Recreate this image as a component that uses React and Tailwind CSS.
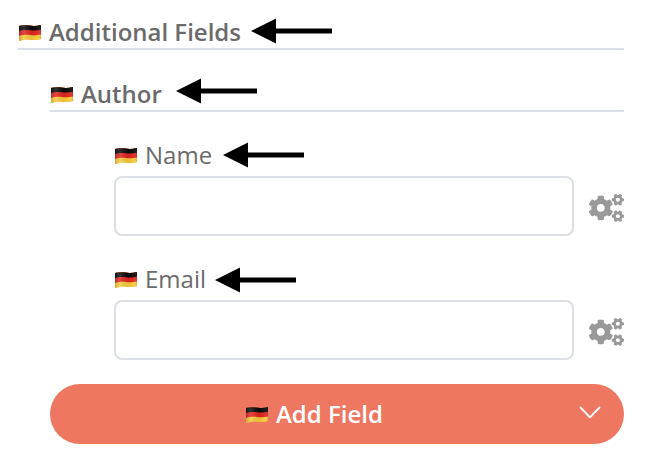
import { FaCogs } from "react-icons/fa";

function Flag({ id, className = "" }) {
  return (
    <svg className={`shrink-0 ${className}`} width="24" height="18" viewBox="0 0 24 18">
      <defs>
        <clipPath id={`${id}-shape`}>
          <path d="M1 2.6 Q1 2 1.8 1.8 C5 .9 8 1 12 1.6 S19 1.8 22.2 1 Q23 .8 23 1.6 V14.6 Q23 15.2 22.2 15.4 C19 16.2 16 16.1 12 15.9 S5 16 1.8 17 Q1 17.2 1 16.4 Z" />
        </clipPath>
        <linearGradient id={`${id}-shade`} x1="0" x2="1" y1="0" y2="0">
          <stop offset="0" stopColor="#000" stopOpacity=".22" />
          <stop offset=".25" stopColor="#fff" stopOpacity=".16" />
          <stop offset=".6" stopColor="#000" stopOpacity=".06" />
          <stop offset=".85" stopColor="#fff" stopOpacity=".06" />
          <stop offset="1" stopColor="#000" stopOpacity=".25" />
        </linearGradient>
      </defs>
      <g clipPath={`url(#${id}-shape)`}>
        <rect width="24" height="18" fill="#f8c93a" />
        <path d="M0 0 H24 V10.2 C19 11.4 16 11.3 12 11 S5 10.8 0 12.2 Z" fill="#e0251f" />
        <path d="M0 0 H24 V5.4 C19 6.6 16 6.6 12 6.2 S5 5.8 0 7.2 Z" fill="#0b0b0b" />
        <rect width="24" height="18" fill={`url(#${id}-shade)`} />
      </g>
    </svg>
  );
}

function Arrow({ className }) {
  return (
    <svg className={`shrink-0 ${className}`} width="81" height="26" viewBox="0 0 81 26">
      <path d="M0 13 L25 .5 V10.5 H81 V15.5 H25 V25.5 Z" fill="#000" />
    </svg>
  );
}

function Field({ id, label, arrowClass }) {
  return (
    <div className="pl-16">
      <div className="flex h-8 items-center text-[#6b6b6b]">
        <Flag id={id} className="mt-px" />
        <label htmlFor={`${id}-input`} className="ml-[7px] leading-8">{label}</label>
        <Arrow className={arrowClass} />
      </div>
      <div className="mt-[5px] flex items-center justify-between">
        <input id={`${id}-input`} className="h-[60px] w-[460px] rounded-lg border-2 border-[#dcdfe6] bg-white px-4 outline-none" />
        <FaCogs className="mt-[3px] h-7 w-[35px] text-[#999]" />
      </div>
    </div>
  );
}

export default function App() {
  return (
    <main className="h-[466px] w-[646px] bg-white pt-4 pr-[22px] pl-[18px] font-['Open_Sans',sans-serif] text-[24px] leading-8">
      <header className="flex h-[34px] items-center border-b-2 border-[#dcdfe6] font-semibold text-[#6b6b6b]">
        <Flag id="fields" className="mt-0.5" />
        <h1 className="ml-[7px]">Additional Fields</h1>
        <Arrow className="mb-0.5 ml-2.5" />
      </header>
      <section className="pt-7 pl-8">
        <header className="flex h-[34px] items-center border-b-2 border-[#dcdfe6] font-semibold text-[#6b6b6b]">
          <Flag id="author" className="mt-0.5" />
          <h2 className="ml-[7px]">Author</h2>
          <Arrow className="mb-1.5 ml-3.5" />
        </header>
        <div className="mt-[27px] flex flex-col gap-[27px]">
          <Field id="name" label="Name" arrowClass="ml-[11px]" />
          <Field id="email" label="Email" arrowClass="mt-0.5 ml-[9px]" />
        </div>
        <button className="mt-6 flex h-[60px] w-full items-center rounded-full bg-[#ee7762] pr-[23px] pl-[195px] font-semibold text-white">
          <Flag id="add" className="mt-0.5" />
          <span className="ml-[7px]">Add Field</span>
          <svg className="mt-[-3px] ml-auto" width="22" height="13" viewBox="0 0 22 13" fill="none" stroke="currentColor" strokeWidth="1.8" strokeLinecap="round" strokeLinejoin="round">
            <path d="M1.5 1.5 L11 11.3 L20.5 1.5" />
          </svg>
        </button>
      </section>
    </main>
  );
}
